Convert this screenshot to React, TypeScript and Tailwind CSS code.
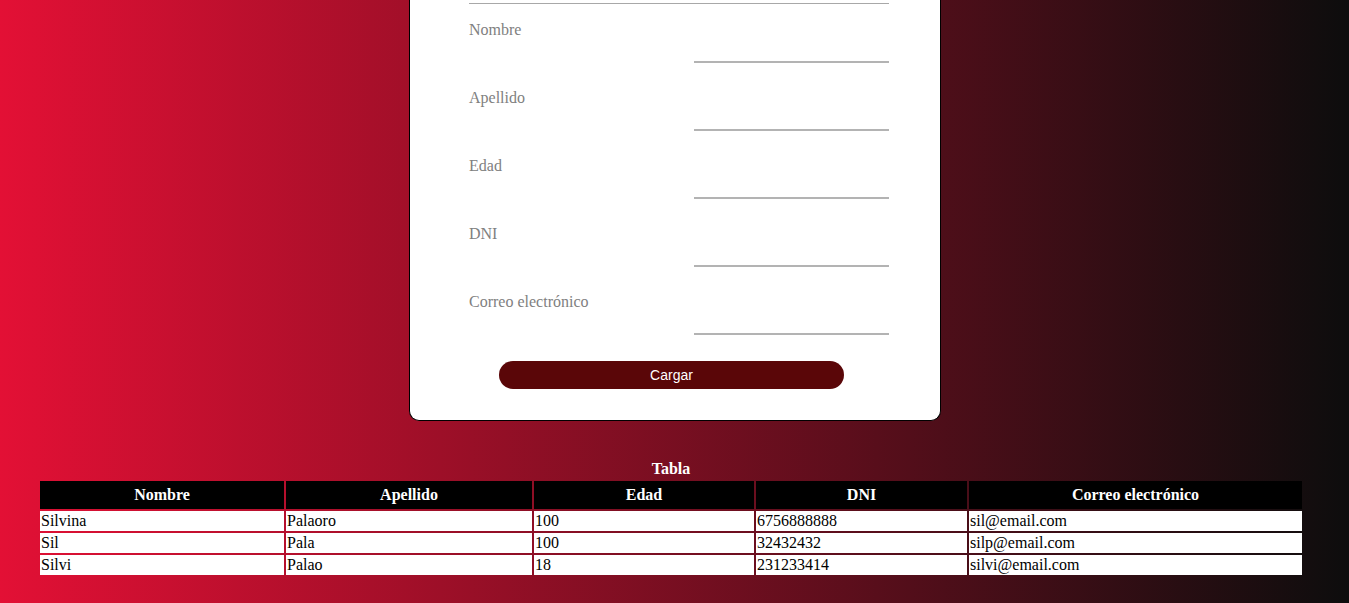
import React from 'react';

const fields = ['Nombre', 'Apellido', 'Edad', 'DNI', 'Correo electrónico'];

const rows = [
  { nombre: 'Silvina', apellido: 'Palaoro', edad: '100', dni: '6756888888', correo: 'sil@email.com' },
  { nombre: 'Sil', apellido: 'Pala', edad: '100', dni: '32432432', correo: 'silp@email.com' },
  { nombre: 'Silvi', apellido: 'Palao', edad: '18', dni: '231233414', correo: 'silvi@email.com' },
];

export default function App() {
  return (
    <div className="min-h-screen w-full bg-[linear-gradient(to_right,#e31035,#0d0d0d)] font-['Liberation_Serif',serif] pb-[27px]">
      {/* Form card */}
      <div className="ml-[409px] w-[532px] bg-white border border-black border-t-0 rounded-b-[10px] pl-[59px] pt-[3px] pb-[31px]">
        <div className="w-[420px] h-[1px] bg-[#a8a8a8]" />
        <div className="w-[420px] pt-[17px]">
          {fields.map((f) => (
            <Field key={f} label={f} />
          ))}
        </div>
        <button className="ml-[30px] w-[345px] h-[28px] rounded-full bg-[#5a0608] text-white text-[14px] font-['Liberation_Sans',sans-serif]">
          Cargar
        </button>
      </div>

      {/* Table */}
      <div className="mt-[39px] ml-[38px] w-[1266px]">
        <table className="w-full border-separate border-spacing-[2px] text-[16px] leading-[18px]">
          <caption className="text-white font-bold pb-[1px]">Tabla</caption>
          <thead>
            <tr>
              <Th w="w-[244px]">Nombre</Th>
              <Th w="w-[246px]">Apellido</Th>
              <Th w="w-[220px]">Edad</Th>
              <Th w="w-[211px]">DNI</Th>
              <Th w="w-[333px]">Correo electrónico</Th>
            </tr>
          </thead>
          <tbody>
            {rows.map((r) => (
              <tr key={r.correo}>
                <Td>{r.nombre}</Td>
                <Td>{r.apellido}</Td>
                <Td>{r.edad}</Td>
                <Td>{r.dni}</Td>
                <Td>{r.correo}</Td>
              </tr>
            ))}
          </tbody>
        </table>
      </div>
    </div>
  );
}

function Field({ label }: { label: string }) {
  return (
    <div className="flex flex-col h-[68px]">
      <label className="text-[16px] leading-[18px] text-[#808080]">{label}</label>
      <input
        type="text"
        className="self-end w-[195px] h-[24px] border-b-2 border-[#b3b3b3] outline-none bg-transparent"
      />
    </div>
  );
}

function Th({ children, w }: { children: React.ReactNode; w: string }) {
  return (
    <th className={`${w} bg-black text-white font-bold text-center py-[5px] px-[1px]`}>
      {children}
    </th>
  );
}

function Td({ children }: { children: React.ReactNode }) {
  return <td className="bg-white text-black text-left px-[1px] py-[1px]">{children}</td>;
}
